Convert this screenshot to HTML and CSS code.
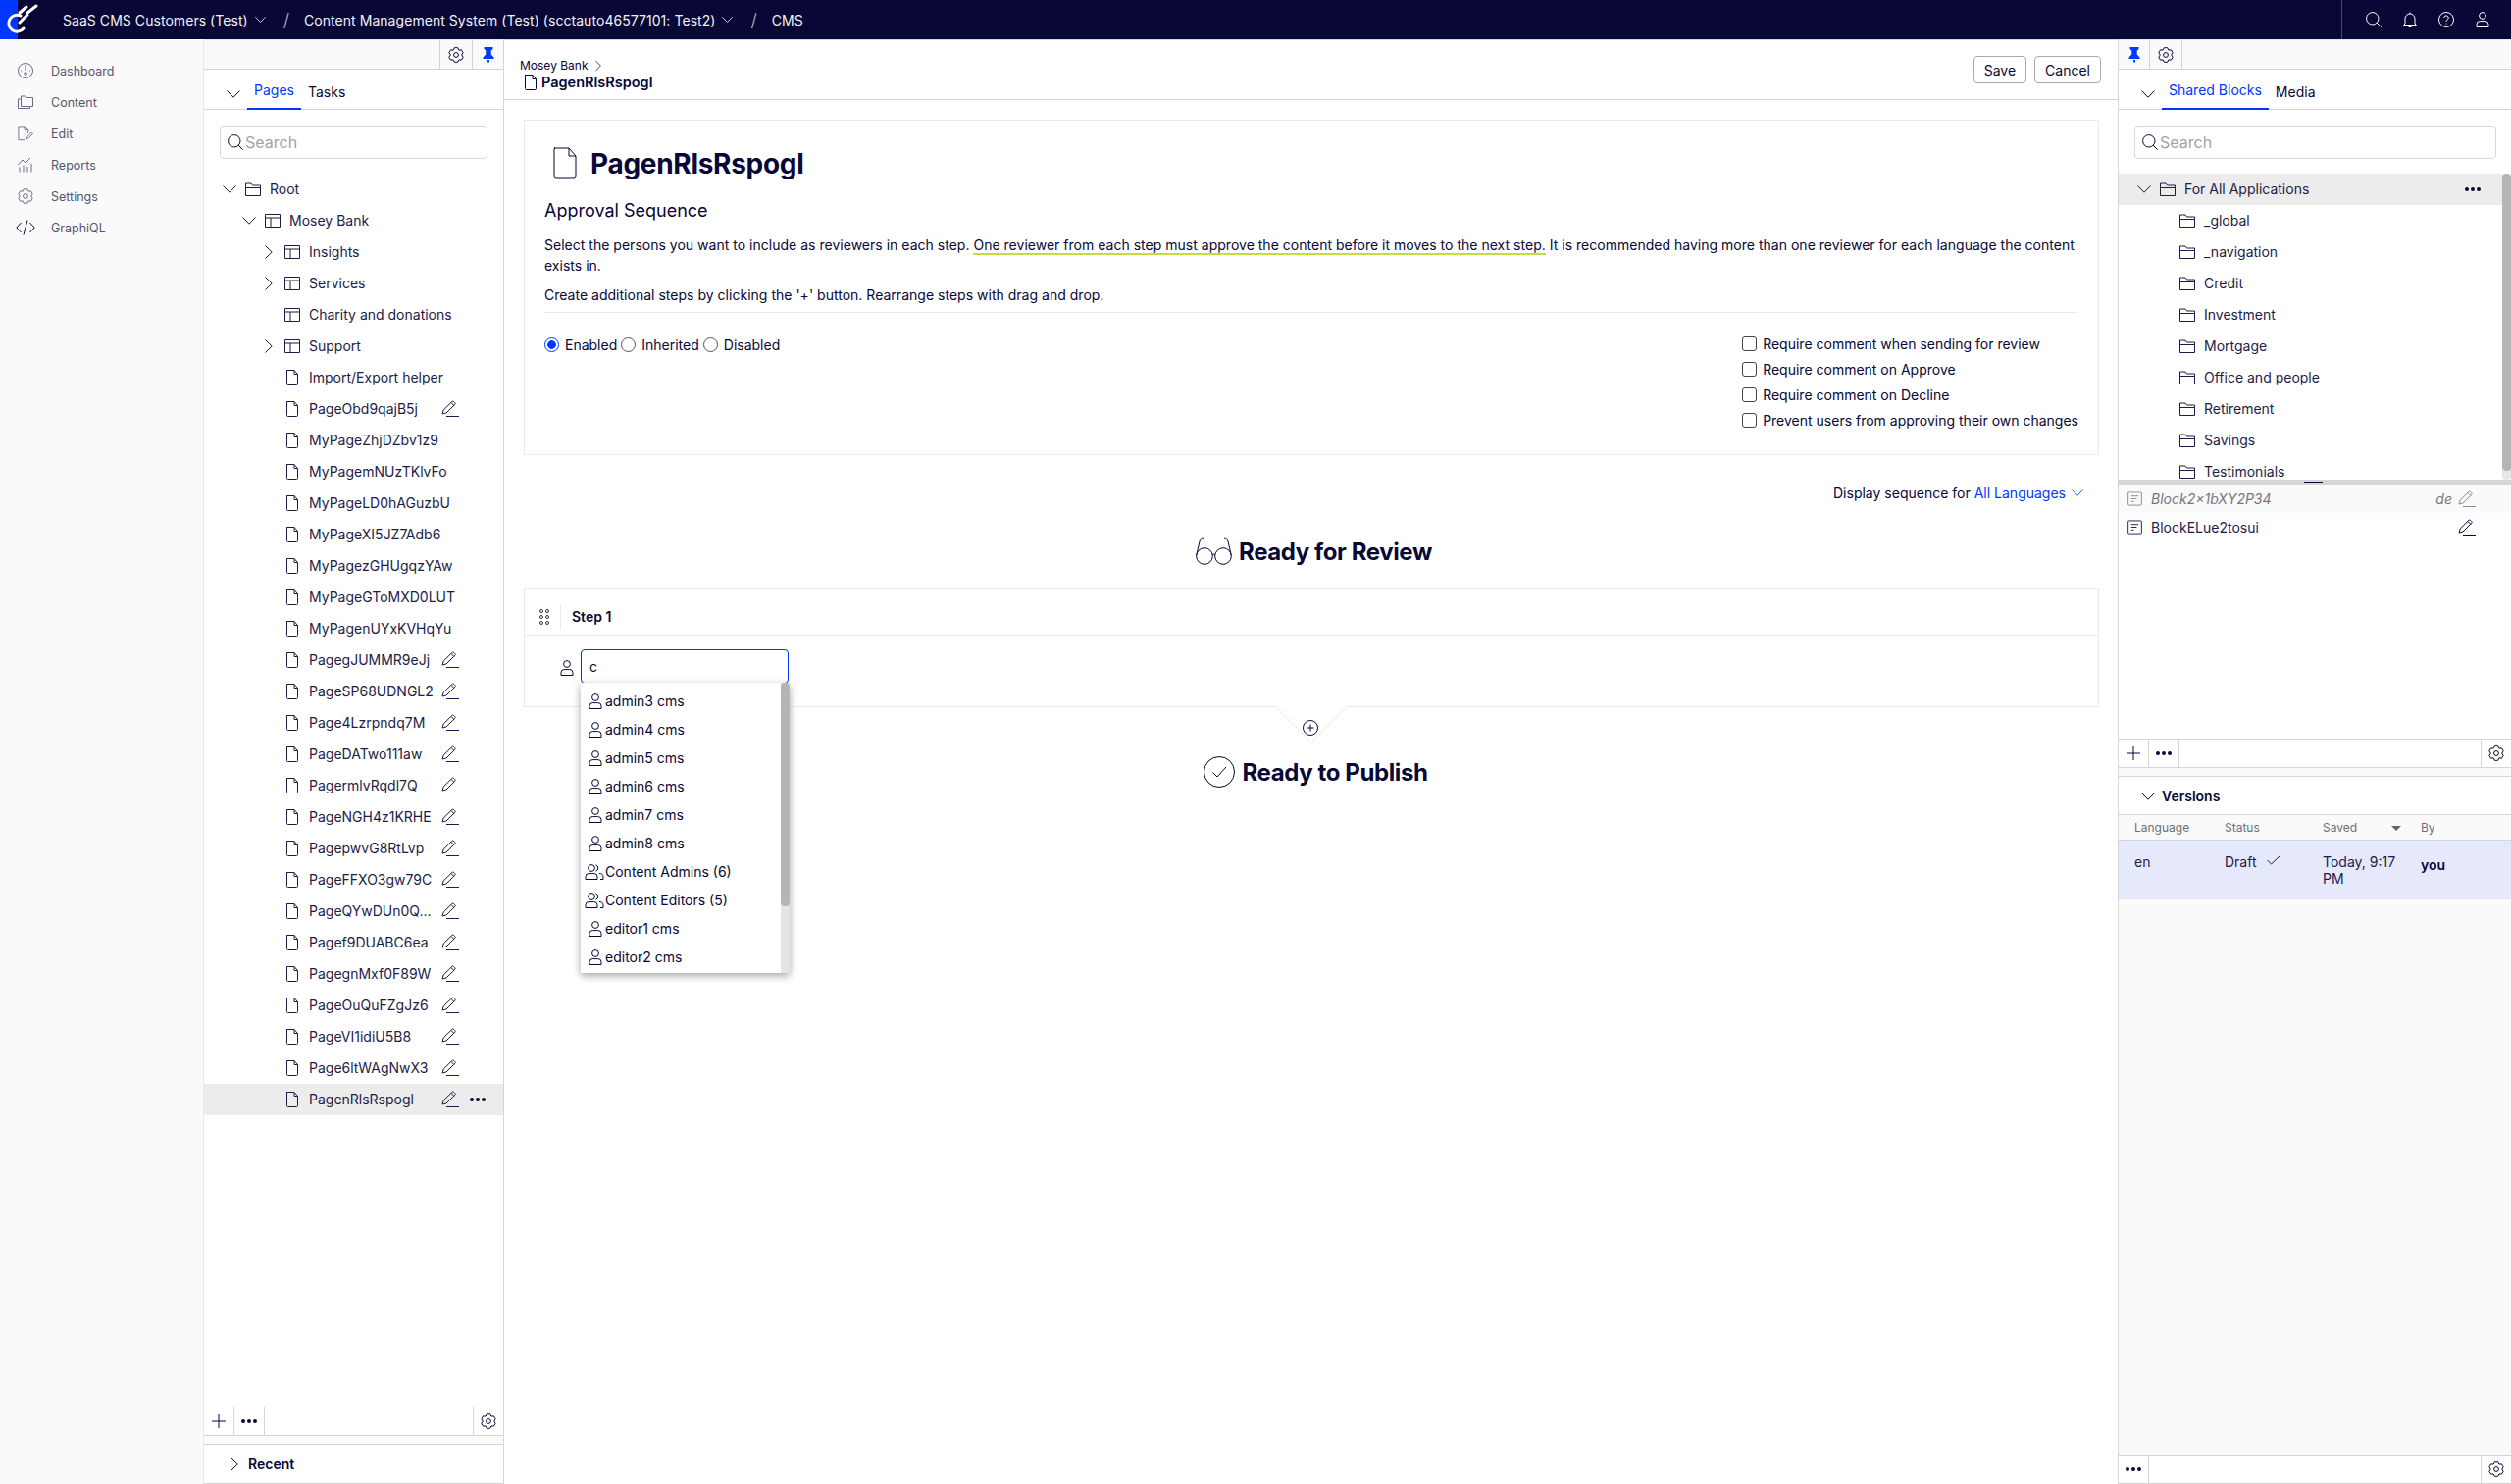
FILE: index.html
```html
<!DOCTYPE html>
<html lang="en">
<head>
    <meta charset="UTF-8">
    <title>CMS - Approval Sequence</title>
    <link rel="stylesheet" href="styles.css">
</head>
<body>
    <svg class="icon-defs" xmlns="http://www.w3.org/2000/svg">
        <symbol id="i-page" viewBox="0 0 16 16"><path d="M2.500 .5h7.500l3.500 4v10a1 1 0 0 1-1 1h-9a1 1 0 0 1-1-1v-13.500a.5.500 0 0 1 .5-.5zM10 .5v4h3.500"/></symbol>
        <symbol id="i-folder" viewBox="0 0 16 16"><path d="M.5 2h5.500l1.500 2h8v10.500h-15zM.5 6.500h15"/></symbol>
        <symbol id="i-layout" viewBox="0 0 16 16"><path d="M.5 1.500h15v13h-15zM.5 5h15M6 5v9.500"/></symbol>
        <symbol id="i-pencil" viewBox="0 0 18 18"><path d="M1 14l1.200-4L10.800 1.500a1.300 1.300 0 0 1 1.900 0l1 1a1.300 1.300 0 0 1 0 1.900L5 13zM10 2.500l2.800 2.900M5 16.500h13"/></symbol>
        <symbol id="i-gear" viewBox="0 0 16 16"><path d="M6.310.69L9.690.69L10.850 3.060L13.480 2.890L15.170 5.810L13.700 8L15.170 10.190L13.480 13.110L10.850 12.940L9.690 15.310L6.310 15.310L5.150 12.940L2.520 13.110L.83 10.190L2.300 8L.83 5.810L2.520 2.890L5.150 3.060z"/><circle cx="8" cy="8" r="2.400"/></symbol>
        <symbol id="i-pin" viewBox="0 0 16 16"><path class="solid" d="M3.500 0h9v2l-1.800 1.500v4l2.800 3v1.500h-11v-1.500l2.800-3v-4L3.500 2zM7 13h2v1.200l-.6 1.800h-.8L7 14.200z"/></symbol>
        <symbol id="i-search" viewBox="0 0 16 16"><circle cx="6.800" cy="6.800" r="6.200"/><path d="M11.200 11.200l4.500 4.500"/></symbol>
        <symbol id="i-down" viewBox="0 0 14 8"><path d="M.5 .5L7 7.200 13.500 .5"/></symbol>
        <symbol id="i-right" viewBox="0 0 8 14"><path d="M.5 .5L7.200 7 .5 13.500"/></symbol>
        <symbol id="i-user" viewBox="0 0 16 16"><circle cx="8" cy="4" r="3.400"/><path d="M2 15.500v-2.700a3.200 3.200 0 0 1 3.200-3.200h5.600a3.200 3.200 0 0 1 3.200 3.200v2.700z"/></symbol>
        <symbol id="i-group" viewBox="0 0 20 16"><circle cx="7" cy="4" r="3.400"/><path d="M1 15.500v-2.700a3.200 3.200 0 0 1 3.200-3.200h5.600a3.200 3.200 0 0 1 3.200 3.200v2.700zM11.500 .8a3.400 3.400 0 0 1 0 6.400M15 9.600a3.200 3.200 0 0 1 4 3.200v2.700h-3"/></symbol>
        <symbol id="i-block" viewBox="0 0 16 16"><path d="M1.500 1h13a.8.8 0 0 1 .8.800v12.400a.8.8 0 0 1-.8.800h-13a.8.8 0 0 1-.8-.8V1.800a.8.8 0 0 1 .8-.8zM4 5h8M4 8h6M4 11h3"/></symbol>
        <symbol id="i-plus" viewBox="0 0 14 14"><path d="M7 0v14M0 7h14"/></symbol>
        <symbol id="i-check" viewBox="0 0 14 10"><path d="M.5 5l4 4L13.500 .5"/></symbol>
    </svg>

    <header class="topbar">
        <div class="logo">
            <svg width="40" height="40" viewBox="0 0 40 40"><path d="M20 13L27 7M28 13L37 6M20 23L28 15M21 16A8.500 8.500 0 1 0 24 29" fill="none" stroke="#fff" stroke-width="3" stroke-linecap="round"/></svg>
        </div>
        <span class="crumb">SaaS CMS Customers (Test)</span>
        <svg class="ic top-chev"><use href="#i-down"/></svg>
        <span class="slash">/</span>
        <span class="crumb">Content Management System (Test) (scctauto46577101: Test2)</span>
        <svg class="ic top-chev"><use href="#i-down"/></svg>
        <span class="slash">/</span>
        <span class="crumb">CMS</span>
        <div class="top-tools">
            <svg class="ic top-ic" viewBox="0 0 16 16"><use href="#i-search"/></svg>
            <svg class="ic top-ic" viewBox="0 0 16 16"><path d="M8 .5v1.500M3 12V7a5 5 0 0 1 10 0v5l1.500 1.500h-13zM6.500 15.500h3"/></svg>
            <svg class="ic top-ic" viewBox="0 0 16 16"><circle cx="8" cy="8" r="7.500"/><path d="M5.800 6a2.200 2.200 0 1 1 3.300 2c-.8.500-1.100 1-1.100 1.800M8 11.500v1"/></svg>
            <svg class="ic top-ic"><use href="#i-user"/></svg>
        </div>
    </header>

    <div class="shell">
        <nav class="sidenav">
            <a class="nav-item">
                <svg class="ic nav-ic" viewBox="0 0 16 16"><circle cx="8" cy="8" r="7.500"/><path d="M8 2v6M3 8h1M12 8h1"/><circle cx="8" cy="11" r="1.300"/></svg>
                Dashboard
            </a>
            <a class="nav-item">
                <svg class="ic nav-ic" viewBox="0 0 16 16"><path d="M3.500 2h4l1.200 1.500h6.800v9h-12zM3.500 5h-3v9.500h12v-2"/></svg>
                Content
            </a>
            <a class="nav-item">
                <svg class="ic nav-ic" viewBox="0 0 18 18"><path d="M8 16.500H1V1h7l4 4v4M8 1v4h4M10 16l1-3 5-5 1.500 1.500-5 5z"/></svg>
                Edit
            </a>
            <a class="nav-item">
                <svg class="ic nav-ic" viewBox="0 0 16 16"><path d="M.5 8L5 3l3 3 5-5M2 10.500v5M6 8.500v7M10 10v5.500M14 7v8.500"/></svg>
                Reports
            </a>
            <a class="nav-item">
                <svg class="ic nav-ic"><use href="#i-gear"/></svg>
                Settings
            </a>
            <a class="nav-item">
                <svg class="ic nav-ic nav-code" viewBox="0 0 20 16"><path d="M5.500 3L.8 8l4.700 5M14.500 3l4.700 5-4.700 5M12 .5L8 15.500"/></svg>
                GraphiQL
            </a>
        </nav>

        <aside class="panel panel-left">
            <div class="pane-bar">
                <span class="bar-fill"></span>
                <span class="bar-cell"><svg class="ic ic-16"><use href="#i-gear"/></svg></span>
                <span class="bar-cell bar-pin"><svg class="ic ic-16"><use href="#i-pin"/></svg></span>
            </div>
            <div class="tabs">
                <svg class="ic tabs-chev"><use href="#i-down"/></svg>
                <span class="tab active">Pages</span>
                <span class="tab">Tasks</span>
            </div>
            <div class="search"><svg class="ic ic-16"><use href="#i-search"/></svg><span>Search</span></div>
            <div class="tree tree-grow">
                <div class="row"><span class="chev"><svg class="ic ic-down"><use href="#i-down"/></svg></span><svg class="ic ic-16"><use href="#i-folder"/></svg><span class="name">Root</span></div>
                <div class="row lvl1"><span class="chev"><svg class="ic ic-down"><use href="#i-down"/></svg></span><svg class="ic ic-16"><use href="#i-layout"/></svg><span class="name">Mosey Bank</span></div>
                <div class="row lvl2"><span class="chev"><svg class="ic ic-right"><use href="#i-right"/></svg></span><svg class="ic ic-16"><use href="#i-layout"/></svg><span class="name">Insights</span></div>
                <div class="row lvl2"><span class="chev"><svg class="ic ic-right"><use href="#i-right"/></svg></span><svg class="ic ic-16"><use href="#i-layout"/></svg><span class="name">Services</span></div>
                <div class="row lvl2"><span class="chev"></span><svg class="ic ic-16"><use href="#i-layout"/></svg><span class="name">Charity and donations</span></div>
                <div class="row lvl2"><span class="chev"><svg class="ic ic-right"><use href="#i-right"/></svg></span><svg class="ic ic-16"><use href="#i-layout"/></svg><span class="name">Support</span></div>
                <div class="row lvl2"><span class="chev"></span><svg class="ic ic-16"><use href="#i-page"/></svg><span class="name">Import/Export helper</span></div>
                <div class="row lvl2"><span class="chev"></span><svg class="ic ic-16"><use href="#i-page"/></svg><span class="name">PageObd9qajB5j</span><svg class="ic ic-edit"><use href="#i-pencil"/></svg></div>
                <div class="row lvl2"><span class="chev"></span><svg class="ic ic-16"><use href="#i-page"/></svg><span class="name">MyPageZhjDZbv1z9</span></div>
                <div class="row lvl2"><span class="chev"></span><svg class="ic ic-16"><use href="#i-page"/></svg><span class="name">MyPagemNUzTKlvFo</span></div>
                <div class="row lvl2"><span class="chev"></span><svg class="ic ic-16"><use href="#i-page"/></svg><span class="name">MyPageLD0hAGuzbU</span></div>
                <div class="row lvl2"><span class="chev"></span><svg class="ic ic-16"><use href="#i-page"/></svg><span class="name">MyPageXI5JZ7Adb6</span></div>
                <div class="row lvl2"><span class="chev"></span><svg class="ic ic-16"><use href="#i-page"/></svg><span class="name">MyPagezGHUgqzYAw</span></div>
                <div class="row lvl2"><span class="chev"></span><svg class="ic ic-16"><use href="#i-page"/></svg><span class="name">MyPageGToMXD0LUT</span></div>
                <div class="row lvl2"><span class="chev"></span><svg class="ic ic-16"><use href="#i-page"/></svg><span class="name">MyPagenUYxKVHqYu</span></div>
                <div class="row lvl2"><span class="chev"></span><svg class="ic ic-16"><use href="#i-page"/></svg><span class="name">PagegJUMMR9eJj</span><svg class="ic ic-edit"><use href="#i-pencil"/></svg></div>
                <div class="row lvl2"><span class="chev"></span><svg class="ic ic-16"><use href="#i-page"/></svg><span class="name">PageSP68UDNGL2</span><svg class="ic ic-edit"><use href="#i-pencil"/></svg></div>
                <div class="row lvl2"><span class="chev"></span><svg class="ic ic-16"><use href="#i-page"/></svg><span class="name">Page4Lzrpndq7M</span><svg class="ic ic-edit"><use href="#i-pencil"/></svg></div>
                <div class="row lvl2"><span class="chev"></span><svg class="ic ic-16"><use href="#i-page"/></svg><span class="name">PageDATwo111aw</span><svg class="ic ic-edit"><use href="#i-pencil"/></svg></div>
                <div class="row lvl2"><span class="chev"></span><svg class="ic ic-16"><use href="#i-page"/></svg><span class="name">PagermlvRqdl7Q</span><svg class="ic ic-edit"><use href="#i-pencil"/></svg></div>
                <div class="row lvl2"><span class="chev"></span><svg class="ic ic-16"><use href="#i-page"/></svg><span class="name">PageNGH4z1KRHE</span><svg class="ic ic-edit"><use href="#i-pencil"/></svg></div>
                <div class="row lvl2"><span class="chev"></span><svg class="ic ic-16"><use href="#i-page"/></svg><span class="name">PagepwvG8RtLvp</span><svg class="ic ic-edit"><use href="#i-pencil"/></svg></div>
                <div class="row lvl2"><span class="chev"></span><svg class="ic ic-16"><use href="#i-page"/></svg><span class="name">PageFFXO3gw79C</span><svg class="ic ic-edit"><use href="#i-pencil"/></svg></div>
                <div class="row lvl2"><span class="chev"></span><svg class="ic ic-16"><use href="#i-page"/></svg><span class="name">PageQYwDUn0Q...</span><svg class="ic ic-edit"><use href="#i-pencil"/></svg></div>
                <div class="row lvl2"><span class="chev"></span><svg class="ic ic-16"><use href="#i-page"/></svg><span class="name">Pagef9DUABC6ea</span><svg class="ic ic-edit"><use href="#i-pencil"/></svg></div>
                <div class="row lvl2"><span class="chev"></span><svg class="ic ic-16"><use href="#i-page"/></svg><span class="name">PagegnMxf0F89W</span><svg class="ic ic-edit"><use href="#i-pencil"/></svg></div>
                <div class="row lvl2"><span class="chev"></span><svg class="ic ic-16"><use href="#i-page"/></svg><span class="name">PageOuQuFZgJz6</span><svg class="ic ic-edit"><use href="#i-pencil"/></svg></div>
                <div class="row lvl2"><span class="chev"></span><svg class="ic ic-16"><use href="#i-page"/></svg><span class="name">PageVI1idiU5B8</span><svg class="ic ic-edit"><use href="#i-pencil"/></svg></div>
                <div class="row lvl2"><span class="chev"></span><svg class="ic ic-16"><use href="#i-page"/></svg><span class="name">Page6ltWAgNwX3</span><svg class="ic ic-edit"><use href="#i-pencil"/></svg></div>
                <div class="row lvl2 selected"><span class="chev"></span><svg class="ic ic-16"><use href="#i-page"/></svg><span class="name">PagenRlsRspogl</span><svg class="ic ic-edit"><use href="#i-pencil"/></svg><span class="dots"><i></i><i></i><i></i></span></div>
            </div>
            <div class="pane-foot">
                <span class="foot-cell"><svg class="ic ic-plus"><use href="#i-plus"/></svg></span>
                <span class="foot-cell"><span class="dots"><i></i><i></i><i></i></span></span>
                <span class="bar-fill"></span>
                <span class="foot-gear"><svg class="ic ic-16"><use href="#i-gear"/></svg></span>
            </div>
            <div class="pane-gap"></div>
            <div class="recent"><svg class="ic ic-right"><use href="#i-right"/></svg><strong>Recent</strong></div>
        </aside>

        <main class="content">
            <div class="page-head">
                <div class="page-path">
                    <div class="path-up">Mosey Bank <svg class="ic path-chev"><use href="#i-right"/></svg></div>
                    <div class="path-name"><svg class="ic ic-16"><use href="#i-page"/></svg>PagenRlsRspogl</div>
                </div>
                <div class="head-actions">
                    <button class="btn">Save</button>
                    <button class="btn">Cancel</button>
                </div>
            </div>

            <div class="page-body">
                <section class="card">
                    <h1 class="card-title"><svg class="ic title-ic"><use href="#i-page"/></svg>PagenRlsRspogl</h1>
                    <h2 class="card-sub">Approval Sequence</h2>
                    <p class="intro">Select the persons you want to include as reviewers in each step. <span class="mark">One reviewer from each step must approve the content before it moves to the next step.</span> It is recommended having more than one reviewer for each language the content exists in.</p>
                    <p class="intro intro-2">Create additional steps by clicking the '+' button. Rearrange steps with drag and drop.</p>
                    <div class="options">
                        <div class="radios">
                            <span class="radio on"></span><span class="radio-label">Enabled</span>
                            <span class="radio"></span><span class="radio-label">Inherited</span>
                            <span class="radio"></span><span class="radio-label">Disabled</span>
                        </div>
                        <div class="checks">
                            <div class="check"><span class="box"></span>Require comment when sending for review</div>
                            <div class="check"><span class="box"></span>Require comment on Approve</div>
                            <div class="check"><span class="box"></span>Require comment on Decline</div>
                            <div class="check"><span class="box"></span>Prevent users from approving their own changes</div>
                        </div>
                    </div>
                </section>

                <div class="display-for">Display sequence for <span class="link">All Languages</span><svg class="ic link-chev"><use href="#i-down"/></svg></div>

                <h3 class="stage">
                    <svg class="ic stage-ic" viewBox="0 0 37 28"><circle cx="9" cy="19" r="8.300"/><circle cx="28" cy="19" r="8.300"/><path d="M17.300 18c.8-1.500 1.600-1.500 2.400 0M.8 18L4 4c.4-2 2-3 4-2.800M36.200 18L33 4c-.4-2-2-3-4-2.800"/></svg>
                    Ready for Review
                </h3>

                <section class="step">
                    <div class="step-head">
                        <span class="grip"><i></i><i></i><i></i><i></i><i></i><i></i></span>
                        <strong>Step 1</strong>
                    </div>
                    <div class="step-body">
                        <svg class="ic ic-16"><use href="#i-user"/></svg>
                        <div class="picker">
                            <div class="picker-input">c</div>
                            <ul class="picker-list">
                                <li><svg class="ic ic-16"><use href="#i-user"/></svg>admin3 cms</li>
                                <li><svg class="ic ic-16"><use href="#i-user"/></svg>admin4 cms</li>
                                <li><svg class="ic ic-16"><use href="#i-user"/></svg>admin5 cms</li>
                                <li><svg class="ic ic-16"><use href="#i-user"/></svg>admin6 cms</li>
                                <li><svg class="ic ic-16"><use href="#i-user"/></svg>admin7 cms</li>
                                <li><svg class="ic ic-16"><use href="#i-user"/></svg>admin8 cms</li>
                                <li><svg class="ic ic-group"><use href="#i-group"/></svg>Content Admins (6)</li>
                                <li><svg class="ic ic-group"><use href="#i-group"/></svg>Content Editors (5)</li>
                                <li><svg class="ic ic-16"><use href="#i-user"/></svg>editor1 cms</li>
                                <li><svg class="ic ic-16"><use href="#i-user"/></svg>editor2 cms</li>
                            </ul>
                        </div>
                    </div>
                </section>

                <div class="adder">
                    <svg class="adder-notch" width="74" height="38" viewBox="0 0 74 38"><path d="M0 0L37 37 74 0" fill="#fff" stroke="#eaeaea"/></svg>
                    <svg class="ic adder-plus" viewBox="0 0 16 16"><circle cx="8" cy="8" r="7.500"/><path d="M8 4.500v7M4.500 8h7"/></svg>
                </div>

                <h3 class="stage stage-last">
                    <svg class="ic stage-ic-check" viewBox="0 0 32 32"><circle cx="16" cy="16" r="15.500"/><path d="M9.500 16.500l4.500 4.500 9-10"/></svg>
                    Ready to Publish
                </h3>
            </div>
        </main>

        <aside class="panel panel-right">
            <div class="pane-bar">
                <span class="bar-cell bar-pin right-pin"><svg class="ic ic-16"><use href="#i-pin"/></svg></span>
                <span class="bar-cell"><svg class="ic ic-16"><use href="#i-gear"/></svg></span>
                <span class="bar-fill"></span>
            </div>
            <div class="tabs">
                <svg class="ic tabs-chev"><use href="#i-down"/></svg>
                <span class="tab active">Shared Blocks</span>
                <span class="tab">Media</span>
            </div>
            <div class="search search-wide"><svg class="ic ic-16"><use href="#i-search"/></svg><span>Search</span></div>
            <div class="tree tree-short">
                <div class="tree-scroll"><span class="tree-thumb"></span></div>
                <div class="row selected row-root"><span class="chev"><svg class="ic ic-down"><use href="#i-down"/></svg></span><svg class="ic ic-16"><use href="#i-folder"/></svg><span class="name">For All Applications</span><span class="dots"><i></i><i></i><i></i></span></div>
                <div class="row lvl1"><span class="chev"></span><svg class="ic ic-16"><use href="#i-folder"/></svg><span class="name">_global</span></div>
                <div class="row lvl1"><span class="chev"></span><svg class="ic ic-16"><use href="#i-folder"/></svg><span class="name">_navigation</span></div>
                <div class="row lvl1"><span class="chev"></span><svg class="ic ic-16"><use href="#i-folder"/></svg><span class="name">Credit</span></div>
                <div class="row lvl1"><span class="chev"></span><svg class="ic ic-16"><use href="#i-folder"/></svg><span class="name">Investment</span></div>
                <div class="row lvl1"><span class="chev"></span><svg class="ic ic-16"><use href="#i-folder"/></svg><span class="name">Mortgage</span></div>
                <div class="row lvl1"><span class="chev"></span><svg class="ic ic-16"><use href="#i-folder"/></svg><span class="name">Office and people</span></div>
                <div class="row lvl1"><span class="chev"></span><svg class="ic ic-16"><use href="#i-folder"/></svg><span class="name">Retirement</span></div>
                <div class="row lvl1"><span class="chev"></span><svg class="ic ic-16"><use href="#i-folder"/></svg><span class="name">Savings</span></div>
                <div class="row lvl1"><span class="chev"></span><svg class="ic ic-16"><use href="#i-folder"/></svg><span class="name">Testimonials</span></div>
            </div>
            <div class="splitter"><span></span></div>
            <div class="blocks">
                <div class="block-row muted"><svg class="ic ic-block"><use href="#i-block"/></svg><em>Block2×1bXY2P34</em><em class="lang">de</em><svg class="ic ic-edit"><use href="#i-pencil"/></svg></div>
                <div class="block-row"><svg class="ic ic-block"><use href="#i-block"/></svg><span>BlockELue2tosui</span><svg class="ic ic-edit"><use href="#i-pencil"/></svg></div>
            </div>
            <div class="pane-foot">
                <span class="foot-cell"><svg class="ic ic-plus"><use href="#i-plus"/></svg></span>
                <span class="foot-cell"><span class="dots"><i></i><i></i><i></i></span></span>
                <span class="bar-fill"></span>
                <span class="foot-gear"><svg class="ic ic-16"><use href="#i-gear"/></svg></span>
            </div>
            <div class="pane-gap"></div>
            <div class="versions-head"><svg class="ic tabs-chev"><use href="#i-down"/></svg><strong>Versions</strong></div>
            <div class="versions">
                <div class="v-row v-head">
                    <span class="v-lang">Language</span>
                    <span class="v-status">Status</span>
                    <span class="v-saved">Saved<i class="sort"></i></span>
                    <span class="v-by">By</span>
                </div>
                <div class="v-row v-current">
                    <span class="v-lang">en</span>
                    <span class="v-status">Draft<svg class="ic v-check"><use href="#i-check"/></svg></span>
                    <span class="v-saved">Today, 9:17 PM</span>
                    <strong class="v-by">you</strong>
                </div>
            </div>
            <div class="pane-foot">
                <span class="foot-cell"><span class="dots"><i></i><i></i><i></i></span></span>
                <span class="bar-fill"></span>
                <span class="foot-gear"><svg class="ic ic-16"><use href="#i-gear"/></svg></span>
            </div>
        </aside>
    </div>
</body>
</html>
```

FILE: styles.css
```css
* {
    box-sizing: border-box;
}
html, body {
    margin: 0;
    height: 100%;
    overflow: hidden;
}
body {
    display: flex;
    flex-direction: column;
    font-family: Inter, "Liberation Sans", sans-serif;
    font-size: 14px;
    color: #080736;
    background: #fff;
}
.icon-defs {
    position: absolute;
    width: 0;
    height: 0;
}
.ic {
    flex: none;
    fill: none;
    stroke: currentColor;
    stroke-width: 1;
    display: block;
}
.ic-16 { width: 16px; height: 16px; }
.ic-down { width: 14px; height: 8px; }
.ic-right { width: 8px; height: 14px; }
.ic-plus { width: 14px; height: 14px; }
.ic-edit { width: 18px; height: 18px; margin-left: 6px; }
.ic-group { width: 20px; height: 16px; margin-left: -3px; margin-right: -1px; }
.ic-block { width: 15px; height: 15px; }
.solid { fill: #0037ff; stroke: none; }

/* top bar */
.topbar {
    flex: none;
    height: 40px;
    display: flex;
    align-items: center;
    background: #080736;
    color: #fff;
}
.logo {
    width: 64px;
    height: 40px;
    background: linear-gradient(to right, #0037ff 18px, transparent 18px);
}
.crumb {
    font-size: 14px;
    letter-spacing: .05px;
    color: #f2f2f6;
}
.top-chev {
    width: 11px;
    height: 8px;
    margin-left: 7px;
}
.slash {
    margin: 0 15px 0 18px;
    font-size: 18px;
    font-weight: 300;
    color: #b9b9cc;
}
.top-tools {
    margin-left: auto;
    height: 40px;
    width: 173px;
    display: flex;
    align-items: center;
    gap: 21px;
    padding-left: 24px;
    border-left: 1px solid #4a4a6e;
}
.top-ic {
    width: 16px;
    height: 16px;
}

.shell {
    flex: 1;
    min-height: 0;
    display: flex;
}

/* side nav */
.sidenav {
    flex: none;
    width: 208px;
    padding-top: 16px;
    background: #fafafa;
    border-right: 1px solid #e8e8e8;
}
.nav-item {
    height: 32px;
    display: flex;
    align-items: center;
    padding-left: 18px;
    font-size: 12.500px;
    color: #56556f;
}
.nav-ic {
    width: 16px;
    height: 16px;
    margin-right: 18px;
    color: #6a6a85;
}
.nav-code {
    width: 20px;
    margin-left: -2px;
    margin-right: 16px;
    color: #080736;
}

/* tree panels */
.panel {
    flex: none;
    display: flex;
    flex-direction: column;
    background: #fff;
}
.panel-left {
    width: 306px;
    border-right: 1px solid #d5d5d5;
}
.panel-right {
    width: 401px;
    margin-left: -1px;
    border-left: 1px solid #d5d5d5;
    position: relative;
}
.pane-bar {
    flex: none;
    height: 31px;
    display: flex;
    background: #fafafa;
    border-top: 1px solid #e6e6e6;
    border-bottom: 1px solid #d5d5d5;
}
.bar-fill {
    flex: 1;
}
.bar-cell {
    width: 33px;
    display: flex;
    align-items: center;
    justify-content: center;
    border-left: 1px solid #d5d5d5;
}
.bar-pin {
    width: 32px;
}
.right-pin {
    border-left: 0;
    border-right: 1px solid #d5d5d5;
}
.right-pin + .bar-cell {
    border-left: 0;
    border-right: 1px solid #d5d5d5;
}
.tabs {
    flex: none;
    height: 41px;
    display: flex;
    align-items: flex-end;
    padding-left: 23px;
    border-bottom: 1px solid #d5d5d5;
}
.tabs-chev {
    width: 14px;
    height: 8px;
    margin: 0 7px 11px 0;
}
.tab {
    padding: 0 7px 9px;
    font-size: 14px;
    line-height: 17px;
}
.tab.active {
    padding: 0 7px 9px;
    color: #0037ff;
    border-bottom: 2px solid #0037ff;
    margin-bottom: -1px;
    padding-bottom: 10px;
}
.search {
    flex: none;
    height: 34px;
    margin: 16px 16px 15px;
    padding-left: 7px;
    display: flex;
    align-items: center;
    gap: 2px;
    border: 1px solid #d8d8d8;
    border-radius: 4px;
    font-size: 16px;
    color: #a3a3a3;
}
.search .ic {
    color: #080736;
}
.tree {
    position: relative;
    min-height: 0;
    overflow: hidden;
}
.tree-grow {
    flex: 1;
}
.tree-short {
    flex: none;
    height: 312px;
}
.row {
    height: 32px;
    display: flex;
    align-items: center;
    padding: 0 18px 0 16px;
    font-size: 14px;
    color: #1d1c47;
}
.lvl1 { padding-left: 36px; }
.lvl2 { padding-left: 56px; }
.row.selected {
    background: #ececec;
}
.chev {
    flex: none;
    width: 20px;
    margin-right: 6px;
    display: flex;
    justify-content: center;
}
.name {
    margin-left: 9px;
    padding-bottom: 2px;
    flex: 1;
    min-width: 0;
    white-space: nowrap;
}
.row .ic-edit + .dots {
    margin-left: 11px;
}
.row .ic-edit:last-child {
    margin-right: 27px;
}
.dots {
    display: inline-flex;
    gap: 2px;
    width: 16px;
}
.dots i {
    width: 4px;
    height: 4px;
    border-radius: 50%;
    background: #080736;
}
.row-root {
    margin-right: 9px;
    padding-right: 22px;
}
.tree-scroll {
    position: absolute;
    top: 0;
    right: 0;
    width: 9px;
    height: 312px;
    background: #e6e6e6;
    border-radius: 4px;
}
.tree-thumb {
    display: block;
    height: 303px;
    background: #b5b5b5;
    border-radius: 4px;
}
.pane-foot {
    flex: none;
    height: 30px;
    display: flex;
    align-items: stretch;
    border-top: 1px solid #d5d5d5;
    border-bottom: 1px solid #d5d5d5;
}
.foot-cell {
    width: 31px;
    display: flex;
    align-items: center;
    justify-content: center;
    border-right: 1px solid #d5d5d5;
}
.foot-gear {
    width: 31px;
    display: flex;
    align-items: center;
    justify-content: center;
    border-left: 1px solid #d5d5d5;
}
.pane-gap {
    flex: none;
    height: 9px;
    background: #fafafa;
    border-bottom: 1px solid #d5d5d5;
}
.recent {
    flex: none;
    height: 40px;
    display: flex;
    align-items: center;
    gap: 10px;
    padding-left: 27px;
    font-size: 14px;
    border-bottom: 1px solid #d5d5d5;
}
.recent strong,
.versions-head strong {
    font-weight: 600;
}

/* right panel extras */
.search-wide {
    margin-right: 15px;
}
.splitter {
    flex: none;
    height: 5px;
    background: #d5d5d5;
    display: flex;
    justify-content: center;
    padding-right: 4px;
}
.splitter span {
    width: 19px;
    height: 1px;
    margin-top: 2px;
    background: #080736;
}
.blocks {
    flex: none;
    height: 259px;
}
.block-row {
    height: 29px;
    display: flex;
    align-items: center;
    padding: 0 36px 0 9px;
    font-size: 14px;
    color: #1d1c47;
}
.block-row .ic-block {
    margin-right: 9px;
}
.block-row > span,
.block-row > em:not(.lang) {
    flex: 1;
}
.block-row.muted {
    background: #fafafa;
    color: #76767f;
}
.block-row .ic-edit {
    color: #080736;
}
.block-row.muted .ic-edit,
.block-row.muted .ic-block {
    color: #8a8a96;
}
.versions-head {
    flex: none;
    height: 39px;
    display: flex;
    align-items: center;
    padding-left: 23px;
    font-size: 14px;
    border-bottom: 1px solid #d5d5d5;
}
.versions-head .tabs-chev {
    margin: 2px 7px 0 0;
}
.versions {
    flex: 1;
    min-height: 0;
    background: #fafafa;
}
.v-row {
    display: grid;
    grid-template-columns: 92px 100px 100px 1fr;
    padding-left: 16px;
}
.v-head {
    height: 26px;
    align-items: center;
    font-size: 12px;
    color: #6f6f78;
    border-bottom: 1px solid #d5d5d5;
}
.v-saved {
    position: relative;
}
.sort {
    position: absolute;
    left: 70px;
    top: 6px;
    border: 5px solid transparent;
    border-top: 5px solid #66666f;
    border-bottom: 0;
}
.v-current {
    height: 60px;
    padding-top: 13px;
    font-size: 14px;
    line-height: 17px;
    background: #e5e9fb;
    color: #1d1c47;
}
.v-current .v-saved {
    padding-right: 10px;
}
.v-status {
    display: flex;
    gap: 10px;
}
.v-check {
    width: 14px;
    height: 10px;
    margin-top: 2px;
}
.v-current .v-by {
    margin-top: 3px;
    font-weight: 600;
    color: #080736;
}

/* main column */
.content {
    flex: 1;
    min-width: 0;
    display: flex;
    flex-direction: column;
}
.page-head {
    flex: none;
    height: 62px;
    display: flex;
    justify-content: space-between;
    padding: 0 18px 0 16px;
    border-top: 1px solid #d5d5d5;
    border-bottom: 1px solid #d5d5d5;
}
.page-path {
    padding-top: 18px;
}
.path-up {
    display: flex;
    align-items: center;
    gap: 7px;
    font-size: 12px;
    line-height: 16px;
}
.path-chev {
    width: 6px;
    height: 12px;
}
.path-name {
    display: flex;
    align-items: center;
    font-size: 14.500px;
    font-weight: 600;
    line-height: 18px;
}
.path-name .ic {
    margin: 0 3px;
}
.head-actions {
    display: flex;
    gap: 8px;
    padding-top: 16px;
}
.btn {
    height: 28px;
    padding: 0 10px;
    font: 14px Inter, "Liberation Sans", sans-serif;
    color: #080736;
    background: #fff;
    border: 1px solid #aaa;
    border-radius: 4px;
}
.page-body {
    flex: 1;
    padding: 20px 20px 0;
    min-height: 0;
}
.card {
    height: 342px;
    padding: 27px 20px 0;
    border: 1px solid #eaeaea;
}
.card-title {
    margin: 0;
    height: 32px;
    padding-top: 2px;
    display: flex;
    align-items: center;
    font-size: 28px;
    font-weight: 700;
    letter-spacing: -.3px;
}
.title-ic {
    width: 32px;
    height: 32px;
    margin: -2px 10px 0 5px;
    stroke-width: .5;
}
.card-sub {
    margin: 21px 0 0;
    font-size: 18px;
    font-weight: 400;
    line-height: 24px;
}
.intro {
    margin: 12px 0 0;
    font-size: 14px;
    line-height: 21px;
    letter-spacing: .015px;
}
.intro-2 {
    margin-top: 9px;
    padding-bottom: 7px;
    border-bottom: 1px solid #eaeaea;
}
.mark {
    border-bottom: 2px solid #c5dc3a;
}
.options {
    display: flex;
    justify-content: space-between;
    margin-top: 18px;
}
.radios {
    display: flex;
    align-items: center;
    height: 26px;
    margin-top: 1px;
}
.radio {
    width: 15px;
    height: 15px;
    border: 1px solid #555;
    border-radius: 50%;
    margin-right: 6px;
}
.radio.on {
    border-color: #0037ff;
    background: radial-gradient(circle, #0037ff 4px, #fff 4.600px);
}
.radio-label {
    margin-right: 4px;
}
.check {
    height: 26px;
    display: flex;
    align-items: center;
    gap: 6px;
}
.box {
    width: 15px;
    height: 15px;
    border: 1px solid #444;
    border-radius: 3px;
}
.display-for {
    height: 24px;
    margin-top: 26px;
    padding-right: 16px;
    display: flex;
    align-items: center;
    justify-content: flex-end;
    gap: 4px;
}
.link {
    color: #0037ff;
}
.link-chev {
    width: 12px;
    height: 7px;
    margin-left: 2px;
    color: #0037ff;
}
.stage {
    margin: 28px 0 0;
    padding-left: 5px;
    height: 40px;
    display: flex;
    align-items: center;
    justify-content: center;
    gap: 7px;
    font-size: 24px;
    font-weight: 700;
    letter-spacing: -.4px;
}
.stage-ic {
    width: 37px;
    height: 28px;
}
.stage-ic-check {
    width: 32px;
    height: 32px;
}
.stage-last {
    margin-top: 10px;
    padding-left: 9px;
}
.step {
    position: relative;
    margin-top: 18px;
    height: 121px;
    border: 1px solid #eaeaea;
}
.step-head {
    height: 47px;
    display: flex;
    align-items: center;
    padding: 9px 0 0 15px;
    border-bottom: 1px solid #eaeaea;
}
.step-head strong {
    font-weight: 600;
}
.grip {
    display: grid;
    grid-template-columns: 4px 4px;
    gap: 2px;
    padding-right: 11px;
    margin-right: 11px;
    border-right: 1px solid #eaeaea;
    height: 26px;
    align-content: center;
}
.grip i {
    width: 4px;
    height: 4px;
    border: 1px solid #333;
    border-radius: 50%;
}
.step-body {
    display: flex;
    padding: 14px 0 0 35px;
    gap: 6px;
}
.step-body > .ic {
    margin-top: 11px;
}
.picker {
    position: relative;
    width: 212px;
}
.picker-input {
    height: 35px;
    padding: 8px 8px;
    font-size: 14px;
    line-height: 17px;
    border: 1px solid #0037ff;
    border-radius: 4px;
}
.picker-list {
    position: absolute;
    z-index: 5;
    top: 34px;
    left: 0;
    width: 213px;
    height: 296px;
    margin: 0;
    padding: 4px 0 0 7px;
    list-style: none;
    background: #fff;
    box-shadow: 0 3px 8px rgba(0, 0, 0, .35);
    border-right: 9px solid #e4e4e4;
}
.picker-list::after {
    content: "";
    position: absolute;
    top: 0;
    right: -9px;
    width: 9px;
    height: 228px;
    border-radius: 4px;
    background: #b5b5b5;
}
.picker-list li {
    height: 29px;
    display: flex;
    align-items: center;
    gap: 2px;
    font-size: 14px;
}
.adder {
    position: relative;
    height: 37px;
    margin-top: -1px;
}
.adder-notch {
    position: absolute;
    left: 50%;
    top: 0;
    margin-left: -37px;
}
.adder-plus {
    position: absolute;
    left: 50%;
    top: 14px;
    width: 16px;
    height: 16px;
    margin-left: -9px;
}
```
